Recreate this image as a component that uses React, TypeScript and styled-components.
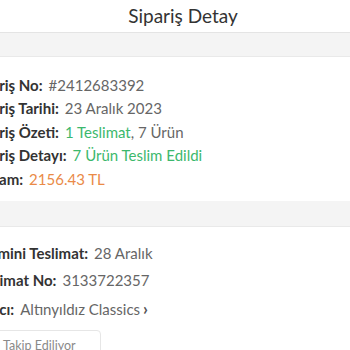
import React from "react";
import styled, { createGlobalStyle } from "styled-components";

const Global = createGlobalStyle`
  html, body { margin: 0; padding: 0; background: #fff; overflow: hidden; }
  body { font-family: Lato, "Open Sans", sans-serif; color: #333; }
`;

const Page = styled.div`
  width: 350px;
  height: 350px;
  overflow: hidden;
  display: flex;
  flex-direction: column;
  & > * { flex-shrink: 0; }
`;

const Header = styled.header`
  height: 33px;
  display: flex;
  align-items: center;
  justify-content: center;
  border-bottom: 1px solid #e4e4e4;
  box-shadow: 0 1px 2px rgba(0,0,0,0.04);
  font-size: 19px;
  color: #333;
  padding-left: 16px;
  padding-bottom: 2px;
  box-sizing: border-box;
`;

const Band = styled.div<{ $h: number; $mt?: number }>`
  height: ${p => p.$h}px;
  margin-top: ${p => p.$mt ?? 0}px;
  background: #f4f4f4;
  border-bottom: 1px solid #e9e9e9;
`;

const Section = styled.section<{ $pt: number; $lh: number; $shift: number }>`
  padding-top: ${p => p.$pt}px;
  margin-left: ${p => -p.$shift}px;
  display: flex;
  flex-direction: column;
  line-height: ${p => p.$lh}px;
  font-size: 15px;
`;

const Row = styled.div`
  white-space: nowrap;
`;

const Label = styled.span`
  font-weight: 700;
  color: #333;
  margin-right: 6px;
`;

const Value = styled.span<{ $tone?: "green" | "orange" }>`
  color: ${p => (p.$tone === "green" ? "#3cb86d" : p.$tone === "orange" ? "#ea8a47" : "#666")};
`;

const Chevron = styled.span`
  font-weight: 700;
  font-size: 17px;
  margin-left: 3px;
  color: #555;
`;

const TrackButton = styled.div`
  margin-top: 7px;
  align-self: flex-start;
  border: 1px solid #e6e6e6;
  border-radius: 4px;
  padding: 5px 24px 4px 28px;
  line-height: 20px;
  color: #8a8a8a;
  font-size: 12.5px;
`;

export default function App() {
  return (
    <Page>
      <Global />
      <Header>Sipariş Detay</Header>
      <Band $h={23} />
      <Section $pt={16.5} $lh={23.5} $shift={29}>
        <Row><Label>Sipariş No:</Label><Value>#2412683392</Value></Row>
        <Row><Label>Sipariş Tarihi:</Label><Value>23 Aralık 2023</Value></Row>
        <Row><Label>Sipariş Özeti:</Label><Value $tone="green">1 Teslimat</Value><Value>, 7 Ürün</Value></Row>
        <Row><Label>Sipariş Detayı:</Label><Value $tone="green">7 Ürün Teslim Edildi</Value></Row>
        <Row><Label>Toplam:</Label><Value $tone="orange">2156.43 TL</Value></Row>
      </Section>
      <Band $h={25} $mt={10} />
      <Section $pt={12.5} $lh={27.5} $shift={26}>
        <Row><Label>Tahmini Teslimat:</Label><Value>28 Aralık</Value></Row>
        <Row><Label>Teslimat No:</Label><Value>3133722357</Value></Row>
        <Row><Label>Satıcı:</Label><Value>Altınyıldız Classics<Chevron>›</Chevron></Value></Row>
        <TrackButton>Takip Ediliyor</TrackButton>
      </Section>
    </Page>
  );
}
